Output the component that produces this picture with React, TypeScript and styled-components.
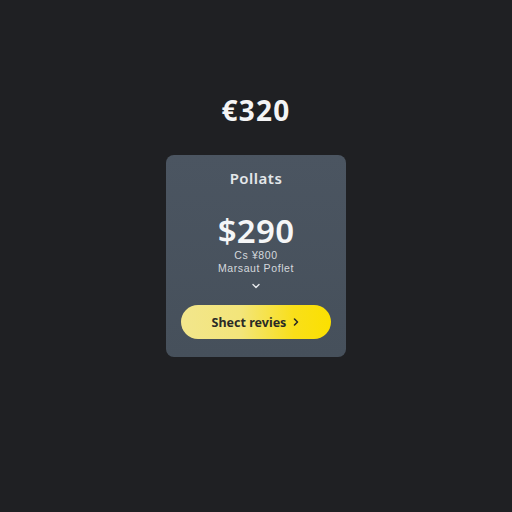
import React, { ReactElement } from "react";
import styled, { createGlobalStyle } from "styled-components";

const GlobalStyle = createGlobalStyle`
  html, body {
    margin: 0;
    padding: 0;
    background: #1f2023;
  }
  body {
    font-family: "Noto Sans", "Open Sans", sans-serif;
  }
`;

const Page = styled.div`
  width: 512px;
  height: 512px;
  display: flex;
  flex-direction: column;
  align-items: center;
  background: #1f2023;
`;

const Headline = styled.h1`
  margin: 93px 0 0;
  font-size: 28px;
  line-height: 34px;
  font-weight: 700;
  color: #f4f4f5;
  letter-spacing: 1.2px;
`;

const Card = styled.section`
  margin-top: 28px;
  width: 180px;
  height: 202px;
  box-sizing: border-box;
  border-radius: 8px;
  background: linear-gradient(180deg, #4b5561 0%, #46505b 100%);
  display: flex;
  flex-direction: column;
  align-items: center;
  padding-top: 14px;
`;

const CardTitle = styled.header`
  font-size: 15px;
  line-height: 18px;
  font-weight: 600;
  color: #e4e7ea;
  letter-spacing: 0.5px;
`;

const Price = styled.div`
  margin-top: 26px;
  font-size: 33px;
  line-height: 36px;
  font-weight: 600;
  color: #f5f6f7;
  letter-spacing: 0.3px;
`;

const Small = styled.div`
  font-family: "Liberation Sans", Arial, sans-serif;
  font-size: 10.5px;
  line-height: 13px;
  color: #d5d9dd;
  letter-spacing: 0.6px;
`;

const Chevron = styled.svg`
  margin-top: 6px;
  width: 10px;
  height: 10px;
`;

const Button = styled.button`
  margin-top: 14px;
  width: 150px;
  height: 34px;
  border: none;
  border-radius: 17px;
  background: linear-gradient(90deg, #f2e68c 0%, #f3e57a 40%, #f9df1a 75%, #fbe000 100%);
  display: flex;
  align-items: center;
  justify-content: center;
  gap: 6px;
  font-family: "Noto Sans", sans-serif;
  font-size: 12.5px;
  font-weight: 700;
  color: #2a2a26;
`;

const App = (): ReactElement => {
  return (
    <Page>
      <GlobalStyle />
      <Headline>€320</Headline>
      <Card>
        <CardTitle>Pollats</CardTitle>
        <Price>$290</Price>
        <Small>Cs ¥800</Small>
        <Small>Marsaut Poflet</Small>
        <Chevron viewBox="0 0 10 10">
          <path d="M2 3.5 L5 6.5 L8 3.5" fill="none" stroke="#e6e9ec" strokeWidth="1.4" strokeLinecap="round" strokeLinejoin="round" />
        </Chevron>
        <Button>
          Shect revies
          <svg width="8" height="10" viewBox="0 0 8 10">
            <path d="M2.5 2 L5.5 5 L2.5 8" fill="none" stroke="#2a2a26" strokeWidth="1.6" strokeLinecap="round" strokeLinejoin="round" />
          </svg>
        </Button>
      </Card>
    </Page>
  );
};

export default App;
